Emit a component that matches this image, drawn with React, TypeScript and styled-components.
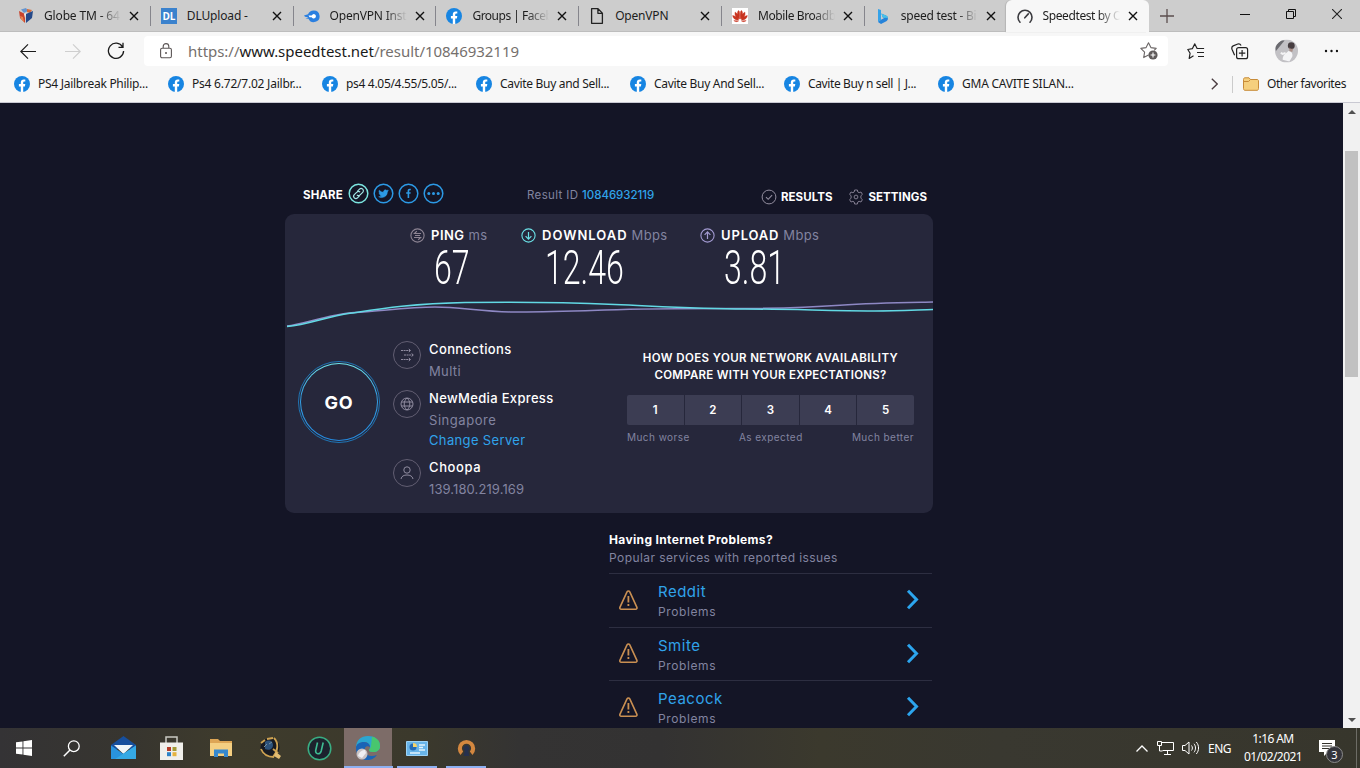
import type { ReactNode } from "react";
import styled, { createGlobalStyle } from "styled-components";

const GlobalStyle = createGlobalStyle`
    * {
        box-sizing: border-box;
    }
    body {
        margin: 0;
        width: 1360px;
        height: 768px;
        overflow: hidden;
        background: #141526;
    }
    svg {
        display: block;
        flex: none;
    }
`;

const Window = styled.div`
    display: flex;
    flex-direction: column;
    width: 1360px;
    height: 768px;
    overflow: hidden;
    font-family: "Noto Sans", "Open Sans", sans-serif;
    white-space: nowrap;
`;

/* browser tabs */
const TabBar = styled.div`
    display: flex;
    flex: none;
    height: 32px;
    padding-left: 8px;
    background: #cdcdcd;
    box-shadow: inset 0 -1px 0 #bdbdbd;
`;

const Tab = styled.div<{ $active?: boolean; $line?: boolean }>`
    display: flex;
    align-items: center;
    position: relative;
    flex: none;
    width: ${(p) => (p.$active ? 141.5 : 142.8)}px;
    height: 32px;
    padding-left: ${(p) => (p.$active ? 9 : 10)}px;
    background: ${(p) => (p.$active ? "#f7f7f7" : "transparent")};
    box-shadow: ${(p) => (p.$active ? "-2px 0 0 #f7f7f7, -3px 0 1px #b5b5b5" : "none")};
    border-radius: ${(p) => (p.$active ? "6px 6px 0 0" : "0")};
    &::after {
        content: "";
        display: ${(p) => (p.$line ? "block" : "none")};
        position: absolute;
        right: 0;
        top: 6px;
        width: 1px;
        height: 20px;
        background: #85858c;
    }
`;

const TabTitle = styled.span<{ $fade?: boolean; $spacing: number }>`
    width: 77px;
    margin-left: 10px;
    overflow: hidden;
    font-size: 12px;
    line-height: 18px;
    letter-spacing: ${(p) => p.$spacing}px;
    color: #1d1d1d;
    mask-image: ${(p) => (p.$fade ? "linear-gradient(90deg, #000 55px, transparent 77px)" : "none")};
`;

const TabClose = styled.span`
    display: flex;
    margin-left: 8px;
`;

const NewTab = styled.span`
    display: flex;
    align-items: center;
    justify-content: center;
    width: 36px;
    height: 32px;
`;

const WindowButtons = styled.div`
    display: flex;
    align-items: center;
    gap: 36px;
    margin-left: auto;
    height: 28px;
    padding-right: 18px;
`;

/* address row */
const Toolbar = styled.div`
    display: flex;
    align-items: center;
    flex: none;
    height: 38px;
    padding: 0 20px;
    background: #f7f7f7;
`;

const NavButtons = styled.div`
    display: flex;
    align-items: center;
    gap: 26.5px;
    width: 124px;
`;

const AddressBox = styled.div`
    display: flex;
    align-items: center;
    width: 1024px;
    height: 30px;
    padding: 0 10px 0 16px;
    border-radius: 4px;
    background: #fff;
`;

const Url = styled.span`
    flex: 1;
    margin-left: 16px;
    font-size: 15px;
    letter-spacing: -0.03px;
    color: #75706d;
    b {
        font-weight: 400;
        color: #1a1a1a;
    }
`;

const ToolIcons = styled.div`
    display: flex;
    align-items: center;
    gap: 26px;
    margin-left: 19px;
`;

/* favorites bar */
const Favorites = styled.div`
    display: flex;
    align-items: center;
    flex: none;
    height: 33px;
    padding: 0 14px 4px;
    background: #f7f7f7;
    border-bottom: 1px solid #c9c9d2;
`;

const Favorite = styled.div`
    display: flex;
    align-items: center;
    width: 154px;
    gap: 8px;
`;

const FavoriteText = styled.span<{ $spacing: number }>`
    font-size: 12px;
    line-height: 16px;
    letter-spacing: ${(p) => p.$spacing}px;
    color: #1b1b1b;
`;

const FavoritesEnd = styled.div`
    display: flex;
    align-items: center;
    margin-left: auto;
`;

const Folder = styled.span`
    margin-right: 8px;
`;

const Divider = styled.span`
    width: 1px;
    height: 17px;
    margin: 0 10px 0 14px;
    background: #cbcbcb;
`;

/* page */
const Viewport = styled.div`
    display: flex;
    flex: none;
    height: 625px;
    overflow: hidden;
    background: #141526;
`;

const Page = styled.main`
    flex: 1;
    padding-left: 285px;
    font-family: Inter, "Noto Sans", sans-serif;
`;

const Scrollbar = styled.div`
    display: flex;
    flex-direction: column;
    align-items: center;
    justify-content: space-between;
    width: 17px;
    padding: 7px 0 6px;
    background: #f1f1f1;
`;

const Thumb = styled.div`
    width: 13px;
    height: 226px;
    margin: 37px 0 auto;
    background: #c1c1c1;
`;

const Arrow = styled.span<{ $down?: boolean }>`
    width: 0;
    border-left: 4px solid transparent;
    border-right: 4px solid transparent;
    ${(p) => (p.$down ? "border-top" : "border-bottom")}: 4px solid #505050;
`;

const ShareRow = styled.div`
    display: flex;
    align-items: center;
    width: 648px;
    height: 111px;
    padding: 71px 6px 0 18px;
`;

const ShareLabel = styled.span`
    width: 45px;
    padding-top: 1px;
    font-size: 11.5px;
    font-weight: 700;
    letter-spacing: 0.1px;
    color: #fff;
`;

const ShareIcons = styled.div`
    display: flex;
    gap: 4px;
    padding-bottom: 1px;
`;

const ResultId = styled.span`
    margin-left: 83px;
    padding-top: 1px;
    font-size: 11.5px;
    letter-spacing: 0.37px;
    color: #8284a0;
    b {
        font-weight: 500;
        letter-spacing: -0.05px;
        color: #30a3ea;
    }
`;

const PageNav = styled.nav`
    display: flex;
    gap: 16px;
    margin-left: auto;
    padding-top: 5px;
`;

const NavLink = styled.a`
    display: flex;
    align-items: center;
    gap: 4px;
    font-size: 11.5px;
    font-weight: 700;
    letter-spacing: 0.06px;
    color: #fff;
`;

const Card = styled.section`
    width: 648px;
    height: 299px;
    overflow: hidden;
    border-radius: 9px;
    background: #26273b;
`;

const Metrics = styled.div`
    display: grid;
    grid-template-columns: 111px 179px 150px;
    height: 81px;
    padding: 14px 0 0 124.5px;
`;

const MetricTitle = styled.div`
    display: flex;
    align-items: center;
    height: 15px;
`;

const MetricName = styled.span<{ $spacing: number }>`
    margin: -1px 4px 0 6.5px;
    font-size: 13px;
    font-weight: 600;
    letter-spacing: ${(p) => p.$spacing}px;
    color: #fff;
`;

const MetricUnit = styled.span`
    margin-top: -1px;
    font-size: 13px;
    letter-spacing: 0.35px;
    color: #8284a0;
`;

const MetricValue = styled.div`
    width: 78px;
    margin-left: 24px;
    font-family: Roboto, sans-serif;
    font-size: 49px;
    font-weight: 300;
    line-height: 49px;
    color: #fff;
    transform: scaleX(0.655);
    transform-origin: left;
`;

const Details = styled.div`
    display: grid;
    grid-template-columns: 108px 234px 287px;
    padding-top: 6px;
`;

const GoWrap = styled.div`
    padding: 20px 0 0 13px;
`;

const GoOuter = styled.div`
    display: grid;
    place-items: center;
    width: 82px;
    height: 82px;
    border: 1px solid #1f75b5;
    border-radius: 50%;
`;

const GoRing = styled.div`
    display: grid;
    place-items: center;
    width: 78px;
    height: 78px;
    border-radius: 50%;
    background: linear-gradient(#70e6ec, #36a5e8 40%, #2489df);
`;

const GoLabel = styled.span`
    display: grid;
    place-items: center;
    width: 76px;
    height: 76px;
    border-radius: 50%;
    background: #26273b;
    color: #fff;
    font-size: 18px;
    font-weight: 700;
    letter-spacing: 0.8px;
`;

const Info = styled.div<{ $height: number }>`
    display: flex;
    gap: 8px;
    height: ${(p) => p.$height}px;
`;

const InfoIcon = styled.span`
    display: grid;
    place-items: center;
    width: 28px;
    height: 28px;
    border: 1px solid #625e72;
    border-radius: 50%;
`;

const InfoText = styled.div`
    display: flex;
    flex-direction: column;
    margin-top: -2px;
`;

const InfoLine = styled.span<{ $tone: "title" | "muted" | "link"; $spacing: number }>`
    height: ${(p) => (p.$tone === "title" ? 22 : 20)}px;
    line-height: ${(p) => (p.$tone === "title" ? 20 : 21)}px;
    font-size: 13px;
    font-weight: ${(p) => (p.$tone === "title" ? 500 : 400)};
    letter-spacing: ${(p) => p.$spacing}px;
    color: ${(p) => (p.$tone === "title" ? "#fff" : p.$tone === "link" ? "#30a3ea" : "#8284a0")};
`;

const Survey = styled.div`
    padding-top: 9px;
    text-align: center;
`;

const SurveyTitle = styled.div<{ $spacing: number }>`
    font-size: 11.5px;
    font-weight: 600;
    line-height: 17px;
    letter-spacing: ${(p) => p.$spacing}px;
    color: #fff;
`;

const Scale = styled.div`
    display: grid;
    grid-template-columns: repeat(5, 1fr);
    gap: 1px;
    margin-top: 11px;
    overflow: hidden;
    border-radius: 2px;
`;

const Score = styled.span`
    height: 30px;
    font-size: 11.5px;
    font-weight: 600;
    line-height: 31px;
    color: #fff;
    background: #3c3d53;
`;

const ScaleLabels = styled.div`
    display: flex;
    justify-content: space-between;
    margin-top: 4px;
    font-size: 10px;
    line-height: 16px;
    letter-spacing: 0.45px;
    color: #8284a0;
`;

const Problems = styled.section`
    width: 323px;
    margin: 18px 0 0 324px;
`;

const ProblemsTitle = styled.div`
    font-size: 12px;
    font-weight: 700;
    line-height: 18px;
    letter-spacing: 0.35px;
    color: #fff;
`;

const ProblemsSub = styled.div`
    height: 24px;
    font-size: 12px;
    line-height: 18px;
    letter-spacing: 0.42px;
    color: #8284a0;
`;

const ProblemRow = styled.div`
    display: flex;
    align-items: center;
    height: 53.6px;
    padding: 0 13px 0 9px;
    border-top: 1px solid #2d2e41;
`;

const ProblemText = styled.div`
    flex: 1;
    margin-left: 20px;
    padding-top: 3px;
    font-size: 12px;
    line-height: 19px;
    letter-spacing: 0.6px;
    color: #8284a0;
`;

const ProblemName = styled.div`
    font-size: 15px;
    line-height: 20px;
    letter-spacing: 0.5px;
    color: #30a3ea;
`;

/* taskbar */
const Taskbar = styled.footer`
    display: flex;
    flex: none;
    height: 40px;
    padding-left: 1px;
    background: linear-gradient(90deg, #343335 0, #37352f 130px, #3e3b2c 230px, #3b392c 420px, #343333 520px, #333232 660px, #3b392d 820px, #393830 1000px, #37362c 1360px);
`;

const TaskItem = styled.div<{ $active?: boolean; $open?: boolean; $shift?: number }>`
    display: grid;
    place-items: center;
    width: 49px;
    height: 40px;
    padding-right: ${(p) => 1 + (p.$shift || 0)}px;
    background-color: ${(p) => (p.$active ? "#7d6c68" : "transparent")};
    background-clip: content-box;
    box-shadow: ${(p) => (p.$active ? "inset 0 -2px 0 #8db0f2" : "none")};
    background-image: ${(p) => (p.$open ? "linear-gradient(#8db0f2, #8db0f2)" : "none")};
    background-size: 40px 2px;
    background-position: 4px 38px;
    background-repeat: no-repeat;
`;

const Tray = styled.div`
    display: flex;
    align-items: center;
    margin-left: auto;
    padding-right: 3px;
    color: #fff;
    font-size: 12px;
`;

const TrayIcons = styled.div`
    display: flex;
    align-items: center;
    gap: 8px;
`;

const Lang = styled.span`
    width: 35px;
    margin-left: 9px;
    letter-spacing: -0.5px;
`;

const Clock = styled.div`
    width: 60px;
    text-align: center;
    line-height: 18px;
    letter-spacing: -0.6px;
`;

const Notice = styled.div`
    position: relative;
    height: 40px;
    margin-left: 16px;
    padding: 12px 21px 0 0;
    border-right: 1px solid #6d6c66;
`;

const NoticeCount = styled.span`
    position: absolute;
    left: 7px;
    top: 18px;
    width: 17px;
    height: 17px;
    border: 1px solid #8b8b8b;
    border-radius: 50%;
    background: #34343a;
    font-size: 11px;
    line-height: 15px;
    text-align: center;
`;

const Svg = ({ w, h = w, box, children }: { w: number; h?: number; box?: string; children: ReactNode }) => (
    <svg width={w} height={h} viewBox={box || `0 0 ${w} ${h}`} fill="none">
        {children}
    </svg>
);

const FacebookIcon = () => (
    <Svg w={16}>
        <circle cx="8" cy="8" r="8" fill="#1785e2" />
        <path d="M6.8 16v-5.600H4.900V8.100h1.900V6.400c0-1.900 1.100-3 2.900-3 .8 0 1.600.1 1.600.1v1.900h-.9c-1 0-1.200.6-1.200 1.200v1.500h2.100l-.4 2.300H9.200V16z" fill="#fff" />
    </Svg>
);

const GlobeTmIcon = () => (
    <Svg w={16}>
        <path d="M3 1.500 8 0l2 3-4 2z" fill="#6695cf" />
        <path d="m9 1 5 1-2 3-3-1z" fill="#d66a36" />
        <path d="m1 3 6 3v9L2 10z" fill="#c9442d" />
        <path d="m2 8 3 1 1 5-3-3z" fill="#e9844e" />
        <path d="m8 6 7-3-1 7-6 5z" fill="#254989" />
        <path d="m7 5 1 1-1 4-1-4z" fill="#f2f2ed" />
    </Svg>
);

const DlIcon = styled.span`
    width: 16px;
    height: 16px;
    background: #3b82cd;
    color: #fff;
    font: 700 10px/16px "Open Sans", sans-serif;
    letter-spacing: -0.3px;
    text-align: center;
`;

const OpenVpnFavicon = () => (
    <Svg w={16}>
        <path d="M0 7.500 4 6.300C5 3.800 7 2.500 9.700 2.500a5.800 5.800 0 1 1-5.200 8.200L1.500 10.400l3-1L1 8.800z" fill="#2a7fe0" />
        <path d="M4.500 7.400h3.200a2.200 2.200 0 1 1 0 1.800H5.500z" fill="#fff" />
    </Svg>
);

const FileIcon = () => (
    <Svg w={16}>
        <path d="M2.600.7h6.400l4.400 4.400v10.200H2.600zM8.900.8v4.500h4.400" stroke="#222" strokeWidth="1.300" strokeLinejoin="round" />
    </Svg>
);

const HuaweiIcon = () => (
    <Svg w={16}>
        <path fill="#fff" d="M0 0h16v16H0z" />
        <path d="M7.600 11C5 8 4.800 4.500 6.500 2.500c1.300.3 1.500 4 1.100 8.500zM8.400 11C11 8 11.200 4.500 9.500 2.500 8.200 2.800 8 6.500 8.400 11zM7 11.500C3.800 10 2.500 7 3 4.200 5 4.500 6.500 8 7 11.500zM9 11.500c3.200-1.500 4.500-4.500 4-7.300-2 .3-3.500 3.800-4 7.300zM6.500 12.200C3 12.300.8 10 .7 7.500c2.300.3 4.500 2 5.800 4.700zM9.500 12.200c3.500.1 5.700-2.200 5.800-4.700-2.300.3-4.500 2-5.800 4.700zM6.500 13c-1.500 1-3.500 1-4.700-.4zM9.500 13c1.500 1 3.500 1 4.700-.4z" fill="#c8331f" stroke="#c8331f" strokeWidth=".4" />
    </Svg>
);

const BingIcon = () => (
    <Svg w={16}>
        <path d="m3 1 3 1v9.800L3 14z" fill="#35a2e8" />
        <path d="m6.400 5.500 5 2.300c1.200.7 1.600 1.700 1.600 2.700 0 1.200-.7 2.200-1.700 2.800L6 16l-3-2 3-2.200 3.200-1.700-1.600-.8z" fill="#2583da" />
        <path d="m6.400 5.500 5 2.300c1.200.7 1.600 1.700 1.600 2.700-1-1-2.500-1.100-3.800-.4l-1.600-.8z" fill="#49c1e8" />
    </Svg>
);

const SpeedIcon = () => (
    <Svg w={16}>
        <path d="M3 14.200a7 7 0 1 1 10 0M7.800 9.800l3.500-3.900" stroke="#3b3b3f" strokeWidth="1.600" strokeLinecap="round" />
    </Svg>
);

const tabs = [
    { title: "Globe TM - 64", icon: <GlobeTmIcon />, fade: true, spacing: -0.15 },
    { title: "DLUpload -", icon: <DlIcon>DL</DlIcon>, spacing: -0.15 },
    { title: "OpenVPN Insta", icon: <OpenVpnFavicon />, fade: true, spacing: -0.2 },
    { title: "Groups | Faceb", icon: <FacebookIcon />, fade: true, spacing: -0.5 },
    { title: "OpenVPN", icon: <FileIcon />, spacing: -0.2 },
    { title: "Mobile Broadb", icon: <HuaweiIcon />, fade: true, spacing: -0.4 },
    { title: "speed test - Bi", icon: <BingIcon />, fade: true, spacing: -0.25 },
    { title: "Speedtest by O", icon: <SpeedIcon />, fade: true, spacing: -0.4, active: true },
];

const favorites = [
    { text: "PS4 Jailbreak Philip...", spacing: -0.27 },
    { text: "Ps4 6.72/7.02 Jailbr...", spacing: -0.22 },
    { text: "ps4 4.05/4.55/5.05/...", spacing: -0.31 },
    { text: "Cavite Buy and Sell...", spacing: -0.31 },
    { text: "Cavite Buy And Sell...", spacing: -0.31 },
    { text: "Cavite Buy n sell | J...", spacing: -0.38 },
    { text: "GMA CAVITE SILAN...", spacing: -0.24 },
];

const metrics = [
    { name: "PING", unit: "ms", value: "67", color: "#8d8493", spacing: 0.5, path: "M11 5.500H4.500L6.800 3.200M4 9.500h6.500l-2.300 2.300M5 7.500h5" },
    { name: "DOWNLOAD", unit: "Mbps", value: "12.46", color: "#6be0e6", spacing: 1, path: "M7.500 4v7M4.600 8.200l2.900 2.900 2.900-2.900" },
    { name: "UPLOAD", unit: "Mbps", value: "3.81", color: "#a29ad1", spacing: 0.85, path: "M7.500 11V4M4.600 6.800l2.900-2.900 2.900 2.900" },
];

const problems = ["Reddit", "Smite", "Peacock"];

function Browser() {
    return <>
        <TabBar>
            {tabs.map((tab, i) => (
                <Tab key={tab.title} $active={tab.active} $line={i < 6}>
                    {tab.icon}
                    <TabTitle $fade={tab.fade} $spacing={tab.spacing}>{tab.title}</TabTitle>
                    <TabClose>
                        <Svg w={10}><path d="m1 1 8 8M9 1 1 9" stroke="#111" strokeWidth="1.400" /></Svg>
                    </TabClose>
                </Tab>
            ))}
            <NewTab>
                <Svg w={14}><path d="M7 0v14M0 7h14" stroke="#5b4e4e" strokeWidth="1.300" /></Svg>
            </NewTab>
            <WindowButtons>
                <Svg w={10}><path d="M0 5.500h10" stroke="#111" /></Svg>
                <Svg w={10}><path d="M.5 2.500h7v7h-7zM2.500 2.500v-2h7v7h-2" stroke="#111" /></Svg>
                <Svg w={10}><path d="m0 0 10 10M10 0 0 10" stroke="#222" strokeWidth="1.100" /></Svg>
            </WindowButtons>
        </TabBar>
        <Toolbar>
            <NavButtons>
                <Svg w={17}><path d="M16 8.500H1M8 1.300.8 8.500 8 15.700" stroke="#1b1b1b" strokeWidth="1.200" /></Svg>
                <Svg w={17}><path d="M1 8.500h15M9 1.300l7.200 7.200L9 15.700" stroke="#cfcfcf" strokeWidth="1.200" /></Svg>
                <Svg w={18}><path d="M15.600 5A7.600 7.600 0 1 0 16.600 9M16 .8V5.300h-4.500" stroke="#1b1b1b" strokeWidth="1.300" /></Svg>
            </NavButtons>
            <AddressBox>
                <Svg w={12} h={16}>
                    <rect x=".6" y="5.200" width="10.800" height="9.600" rx="1.500" stroke="#5b5555" strokeWidth="1.100" />
                    <path d="M3.200 5V3.400a2.800 2.800 0 0 1 5.600 0V5" stroke="#5b5555" strokeWidth="1.100" />
                    <circle cx="6" cy="10" r="1" fill="#5b5555" />
                </Svg>
                <Url>https://<b>www.speedtest.net</b>/result/10846932119</Url>
                <Svg w={18}>
                    <path d="m8.500 13-4.800 2.600.9-5.400L.8 6.400l5.300-.8L8.500.8l2.400 4.800 5.300.8-2 2" stroke="#6b6666" strokeWidth="1.100" strokeLinejoin="round" />
                    <circle cx="13" cy="13" r="4.600" fill="#5f5b5b" />
                    <path d="M13 10.600v4.800M10.600 13h4.800" stroke="#fff" strokeWidth="1.100" />
                </Svg>
            </AddressBox>
            <ToolIcons>
                <Svg w={18} h={17}>
                    <path d="m6.500 12.800-4.300 2.600.9-5.200L.8 6.500l4.500-.8L7.800.9l2.300 4.600h7M10 9.500h7M11 13.500h6" stroke="#222" strokeWidth="1.200" strokeLinejoin="round" />
                </Svg>
                <Svg w={18} h={17}>
                    <rect x="5.600" y="4.700" width="11" height="11" rx="2" stroke="#222" strokeWidth="1.200" />
                    <path d="M11.100 7v6.400M7.900 10.200h6.400M3.600 12.300 1 6.200c-.5-1.500 0-2.700 1.200-3.300L6.800 1c1.500-.5 2.500 0 3.300 1.500" stroke="#222" strokeWidth="1.200" />
                </Svg>
                <Svg w={23} h={24} box="0 0 24 24">
                    <clipPath id="avatar"><circle cx="12" cy="12" r="12" /></clipPath>
                    <g clipPath="url(#avatar)">
                        <path fill="#c2c1c5" d="M0 0h24v24H0z" />
                        <path d="M1 12 10 1H6L0 7z" fill="#6b6b70" />
                        <path d="M8 21c0-5 3-6 6-9 3 0 5 3 4 6l-3 5z" fill="#f4f4f6" />
                        <path d="m6 14 2 1 3-1" stroke="#f4f4f6" strokeWidth="2" />
                        <circle cx="17" cy="6.500" r="3.600" fill="#463d40" />
                        <path d="M15 8c1 2 3 2 4 1l-1 4-3-1z" fill="#a98e87" />
                    </g>
                </Svg>
                <Svg w={14} h={4}>
                    <circle cx="2" cy="2" r="1.200" fill="#111" /><circle cx="7.500" cy="2" r="1.200" fill="#111" /><circle cx="13" cy="2" r="1.200" fill="#111" />
                </Svg>
            </ToolIcons>
        </Toolbar>
        <Favorites>
            {favorites.map((f) => (
                <Favorite key={f.text}>
                    <FacebookIcon />
                    <FavoriteText $spacing={f.spacing}>{f.text}</FavoriteText>
                </Favorite>
            ))}
            <FavoritesEnd>
                <Svg w={7} h={12}><path d="m.8.800 5.400 5.200-5.400 5.200" stroke="#4a3c40" strokeWidth="1.300" /></Svg>
                <Divider />
                <Folder>
                    <Svg w={16} h={14}>
                        <path d="M.5 2.500c0-1 .5-1.700 1.500-1.700h4l1.500 1.700h6.500c1 0 1.500.6 1.500 1.500v7.500c0 1-.5 1.800-1.500 1.800H2c-1 0-1.500-.8-1.500-1.800z" fill="#f5cf7d" stroke="#c78b39" />
                        <path d="M1 4.500h4.500l2-2" stroke="#c78b39" />
                    </Svg>
                </Folder>
                <FavoriteText $spacing={-0.4}>Other favorites</FavoriteText>
            </FavoritesEnd>
        </Favorites>
    </>;
}

function ShareBar() {
    return <ShareRow>
        <ShareLabel>SHARE</ShareLabel>
        <ShareIcons>
            <Svg w={21}>
                <circle cx="10.500" cy="10.500" r="9.300" stroke="#7be4df" strokeWidth="1.500" />
                <path d="m9.300 8.300 2.200-2.200a2.200 2.200 0 0 1 3.200 3.200l-2.600 2.600a2.200 2.200 0 0 1-3.200 0M11.700 12.700l-2.200 2.200a2.200 2.200 0 0 1-3.200-3.200l2.600-2.600a2.200 2.200 0 0 1 3.200 0" stroke="#a3e6e6" strokeWidth="1.200" />
            </Svg>
            <Svg w={21}>
                <circle cx="10.500" cy="10.500" r="9.300" stroke="#2c9ae6" strokeWidth="1.500" />
                <path d="M15.400 7.700c-.4.200-.7.300-1.100.3.400-.2.700-.6.800-1-.4.200-.8.400-1.200.5a2 2 0 0 0-3.400 1.800A5.600 5.600 0 0 1 6.300 7.200a2 2 0 0 0 .6 2.600c-.3 0-.6-.1-.9-.2 0 1 .7 1.700 1.600 1.900-.3.100-.6.100-.9 0 .3.800 1 1.400 1.900 1.400a4 4 0 0 1-2.900.8 5.700 5.700 0 0 0 8.700-5c.4-.3.700-.6 1-1z" fill="#2c9ae6" stroke="#2c9ae6" strokeWidth=".5" />
            </Svg>
            <Svg w={21}>
                <circle cx="10.500" cy="10.500" r="9.300" stroke="#2c9ae6" strokeWidth="1.500" />
                <path d="M9.600 15v-4.200H8.200V9.200h1.400V8c0-1.400.8-2.200 2.100-2.200h1.100v1.500H12c-.6 0-.8.300-.8.800v1.100h1.500l-.2 1.600h-1.300V15z" fill="#2c9ae6" />
            </Svg>
            <Svg w={21}>
                <circle cx="10.500" cy="10.500" r="9.300" stroke="#2c9ae6" strokeWidth="1.500" />
                <circle cx="5.800" cy="10.500" r="1.500" fill="#2c9ae6" /><circle cx="10.500" cy="10.500" r="1.500" fill="#2c9ae6" /><circle cx="15.200" cy="10.500" r="1.500" fill="#2c9ae6" />
            </Svg>
        </ShareIcons>
        <ResultId>Result ID <b>10846932119</b></ResultId>
        <PageNav>
            <NavLink>
                <Svg w={16}><circle cx="8" cy="8" r="6.900" stroke="#928d9e" /><path d="m5 8.100 2.200 2.200 3.900-4.200" stroke="#928d9e" strokeWidth="1.100" /></Svg>
                RESULTS
            </NavLink>
            <NavLink>
                <Svg w={16}>
                    <path d="M6.600 1h2.800l.4 2 1.300.7 1.900-.7 1.400 2.400-1.500 1.300v2.600l1.500 1.300L13 13l-1.900-.7-1.300.7-.4 2H6.600l-.4-2-1.300-.7L3 13l-1.400-2.400 1.500-1.300V6.700L1.600 5.400 3 3l1.900.7L6.200 3z" stroke="#817c8f" strokeLinejoin="round" />
                    <circle cx="8" cy="8" r="1.900" stroke="#817c8f" />
                </Svg>
                SETTINGS
            </NavLink>
        </PageNav>
    </ShareRow>;
}

function ResultCard() {
    return <Card>
        <Metrics>
            {metrics.map((m) => (
                <div key={m.name}>
                    <MetricTitle>
                        <Svg w={15}>
                            <circle cx="7.500" cy="7.500" r="6.600" stroke={m.color} strokeWidth="1.100" />
                            <path d={m.path} stroke={m.color} strokeWidth="1.200" />
                        </Svg>
                        <MetricName $spacing={m.spacing}>{m.name}</MetricName>
                        <MetricUnit>{m.unit}</MetricUnit>
                    </MetricTitle>
                    <MetricValue>{m.value}</MetricValue>
                </div>
            ))}
        </Metrics>
        <Svg w={648} h={40} box="285 295 648 40">
            <path d="M287 326C304 324 330 314 355 312.500S410 307 435 307s45 4.500 75 4.900 65-.9 95-1.900 80-1.500 125-1.500 75-.8 110-3.300 65-2.700 93-3.200" stroke="#8e88c4" strokeWidth="1.500" />
            <path d="M287 326.500C308 325 325 317 350 313.300S410 303.500 465 302.600s100-.3 150 1.900 85 4.500 130 4.500 90 2 130 1.900c20 0 40-.9 58-1.400" stroke="#62d9e4" strokeWidth="1.500" />
        </Svg>
        <Details>
            <GoWrap>
                <GoOuter>
                    <GoRing><GoLabel>GO</GoLabel></GoRing>
                </GoOuter>
            </GoWrap>
            <div>
                <Info $height={49}>
                    <InfoIcon>
                        <Svg w={14}><path d="M1 2.500h9M4 7h9M1 11.500h9" stroke="#918da1" strokeDasharray="2 .6" /><path d="m8.800 1 1.700 1.500L8.800 4M11.600 5.500 13.300 7l-1.700 1.500M8.800 10l1.700 1.500L8.800 13" stroke="#918da1" /></Svg>
                    </InfoIcon>
                    <InfoText>
                        <InfoLine $tone="title" $spacing={0.37}>Connections</InfoLine>
                        <InfoLine $tone="muted" $spacing={0.35}>Multi</InfoLine>
                    </InfoText>
                </Info>
                <Info $height={69}>
                    <InfoIcon>
                        <Svg w={14}><circle cx="7" cy="7" r="6" stroke="#918da1" /><path d="M1.500 5h11M1.500 9h11M7 1C3.300 4 3.300 10 7 13c3.700-3 3.700-9 0-12z" stroke="#918da1" /></Svg>
                    </InfoIcon>
                    <InfoText>
                        <InfoLine $tone="title" $spacing={0.33}>NewMedia Express</InfoLine>
                        <InfoLine $tone="muted" $spacing={0.55}>Singapore</InfoLine>
                        <InfoLine $tone="link" $spacing={0.35}>Change Server</InfoLine>
                    </InfoText>
                </Info>
                <Info $height={49}>
                    <InfoIcon>
                        <Svg w={14}><circle cx="7" cy="4" r="3.200" stroke="#918da1" /><path d="M1 13c.5-3 3-4 6-4s5.500 1 6 4" stroke="#918da1" /></Svg>
                    </InfoIcon>
                    <InfoText>
                        <InfoLine $tone="title" $spacing={0.6}>Choopa</InfoLine>
                        <InfoLine $tone="muted" $spacing={0.1}>139.180.219.169</InfoLine>
                    </InfoText>
                </Info>
            </div>
            <Survey>
                <SurveyTitle $spacing={0.4}>HOW DOES YOUR NETWORK AVAILABILITY</SurveyTitle>
                <SurveyTitle $spacing={0.27}>COMPARE WITH YOUR EXPECTATIONS?</SurveyTitle>
                <Scale>
                    {[1, 2, 3, 4, 5].map((n) => <Score key={n}>{n}</Score>)}
                </Scale>
                <ScaleLabels>
                    <span>Much worse</span><span>As expected</span><span>Much better</span>
                </ScaleLabels>
            </Survey>
        </Details>
    </Card>;
}

function Tasks() {
    return <>
        <TaskItem $shift={2}>
            <Svg w={16}><path d="M0 2.300 6.500 1.400v6.100H0zM7.400 1.300 16 0v7.500H7.400zM0 8.400h6.500v6.200L0 13.700zM7.400 8.400H16V16l-8.600-1.200z" fill="#fff" /></Svg>
        </TaskItem>
        <TaskItem $shift={5}>
            <Svg w={17}><circle cx="10.800" cy="6.200" r="5.400" stroke="#fff" strokeWidth="1.300" /><path d="M7 10 .8 16.200" stroke="#fff" strokeWidth="1.500" /></Svg>
        </TaskItem>
        <TaskItem>
            <Svg w={25} h={24}>
                <path d="M0 9 12.500 0 25 9v4H0z" fill="#174f9d" />
                <path d="M3 9h19l-9.500 9z" fill="#f0f5f8" />
                <path d="M0 9.500 12.500 18 25 9.500V23H0z" fill="#2994df" />
                <path d="M25 9.500 4 23h21z" fill="#35a9e5" />
            </Svg>
        </TaskItem>
        <TaskItem>
            <Svg w={24}>
                <path d="M6 7V1h11v6" stroke="#c9c9c2" strokeWidth="1.500" />
                <path d="M0 6.500h23V24H0z" fill="#f0efeb" />
                <path d="M7 11h4v4H7z" fill="#b53c28" /><path d="M12.500 11h4v4h-4z" fill="#a39b35" /><path d="M7 16.200h4v4H7z" fill="#2c82c7" /><path d="M12.500 16.200h4v4h-4z" fill="#e4b33e" />
            </Svg>
        </TaskItem>
        <TaskItem>
            <Svg w={22} h={20}>
                <path d="M0 1h8l2 2h12v15H0z" fill="#dda555" />
                <path d="M0 5h22v13H0z" fill="#f4cf82" />
                <path d="M4 19v-7.500h14V19h-4v-3.500H8V19z" fill="#3688ce" />
            </Svg>
        </TaskItem>
        <TaskItem>
            <Svg w={23}>
                <circle cx="11" cy="10.500" r="9.500" fill="#171a22" />
                <path d="M6 5c4-3 8-1 8 3s-4 6-8 4z" fill="#2d527b" />
                <path d="M2 12c2 5 6 8 13 8M15 1c5 5 4 13-1 19M8 2l6-1M2 6l4-3M14 12l5 4" stroke="#cfa352" strokeWidth="1.800" />
                <path d="m17 15 5 4-2 3-5-3z" fill="#e3bd74" />
                <path d="M8 7 5 10M13 5l-3 2" stroke="#77909d" />
            </Svg>
        </TaskItem>
        <TaskItem>
            <Svg w={25}>
                <circle cx="12.500" cy="12.500" r="11.300" fill="#1c222d" stroke="#39ae83" strokeWidth="1.500" />
                <path d="m10.500 6.500-1.800 8c-.6 4 4.300 4.500 5.500.5l2-8.500" stroke="#3fbc93" strokeWidth="1.600" />
            </Svg>
        </TaskItem>
        <TaskItem $active>
            <Svg w={26}>
                <path d="M1 13C1 5 6 1 13 1c8 0 12 5 12 10 0 4-3 6-7 6-3 0-4-1-4-2 0-1 1-1 1-3 0-3-3-5-6-5-4 0-7 3-8 6z" fill="#2ba6d0" />
                <path d="M17 1.800C23 3 25 7 25 11c0 4-3 6-7 6-3 0-4-1-4-2 0-1 2-2 2-4z" fill="#48c66e" />
                <path d="M1 13c0-4 4-6 8-6 4 0 6 3 6 5-4-2-6 1-5 4 1 5 6 6 12 4-3 4-6 5-10 5C5 25 1 20 1 13z" fill="#1a64b6" />
                <circle cx="7" cy="19" r="5.500" fill="#c9c3c5" />
                <path d="M3 21c1-5 5-6 7-6l1 3-4 5z" fill="#efeff2" />
            </Svg>
        </TaskItem>
        <TaskItem $open>
            <Svg w={22} h={17}>
                <path d="M.5 1.500h21v14H.5z" fill="#69b5e9" stroke="#9cd3f6" />
                <circle cx="7" cy="7" r="3.500" fill="#246ab5" /><path d="M7 7V3a4 4 0 0 1 4 4z" fill="#f5d36a" />
                <path d="M13 5h6M13 7.500h4M13 10h6M4 13h10" stroke="#e2f3fc" strokeWidth="1.300" />
            </Svg>
        </TaskItem>
        <TaskItem $open>
            <Svg w={19}>
                <path d="M3.500 16A8.700 8.700 0 1 1 15.500 16l-2.700-3.500a4.600 4.600 0 1 0-6.600 0z" fill="#d3873f" />
                <path d="M7.700 11.500a2.800 2.800 0 1 1 3.600 0l1 5.500H6.700z" fill="#25304e" />
            </Svg>
        </TaskItem>
    </>;
}

export default function App() {
    return <Window>
        <GlobalStyle />
        <Browser />
        <Viewport>
            <Page>
                <ShareBar />
                <ResultCard />
                <Problems>
                    <ProblemsTitle>Having Internet Problems?</ProblemsTitle>
                    <ProblemsSub>Popular services with reported issues</ProblemsSub>
                    {problems.map((name) => (
                        <ProblemRow key={name}>
                            <Svg w={20} h={21}>
                                <path d="M9 1.800c.6-1 2.200-1 2.800 0l7 15.400c.5 1.100-.1 2.100-1.200 2.100H3.200c-1.100 0-1.700-1-1.200-2.100z" stroke="#c98f52" strokeWidth="1.600" />
                                <path d="M10.400 6v6.500M10.400 14v2" stroke="#c98f52" strokeWidth="1.800" />
                            </Svg>
                            <ProblemText>
                                <ProblemName>{name}</ProblemName>
                                Problems
                            </ProblemText>
                            <Svg w={13} h={22}><path d="m2 1.800 8.500 8.700L2 19.200" stroke="#2ca5ee" strokeWidth="3" /></Svg>
                        </ProblemRow>
                    ))}
                </Problems>
            </Page>
            <Scrollbar>
                <Arrow />
                <Thumb />
                <Arrow $down />
            </Scrollbar>
        </Viewport>
        <Taskbar>
            <Tasks />
            <Tray>
                <TrayIcons>
                    <Svg w={13} h={7}><path d="m.5 6.500 5.500-5.500 5.500 5.500" stroke="#fff" strokeWidth="1.300" /></Svg>
                    <Svg w={17} h={14}><path d="M4.500 1.500h12v8h-11M10.500 10v3M7 13.500h7M.5.500h4v4h-4zM2.500 5v5h3" stroke="#fff" /></Svg>
                    <Svg w={17} h={14}><path d="M.5 4.500h2.500l4-3.500v12L3 9.500H.5zM9.500 4.500c1.200 1.500 1.200 3.500 0 5M12 2.800c2 2.500 2 6 0 8.500M14.300 1c3 3.500 3 8.500 0 12" stroke="#fff" /></Svg>
                </TrayIcons>
                <Lang>ENG</Lang>
                <Clock>1:16 AM<br />01/02/2021</Clock>
                <Notice>
                    <Svg w={16} h={16}><path d="M0 0h16v12H9l-4 4v-4H0z" fill="#fff" /><path d="M3 3.500h10M3 6h10M3 8.500h7" stroke="#34332c" /></Svg>
                    <NoticeCount>3</NoticeCount>
                </Notice>
            </Tray>
        </Taskbar>
    </Window>;
}
